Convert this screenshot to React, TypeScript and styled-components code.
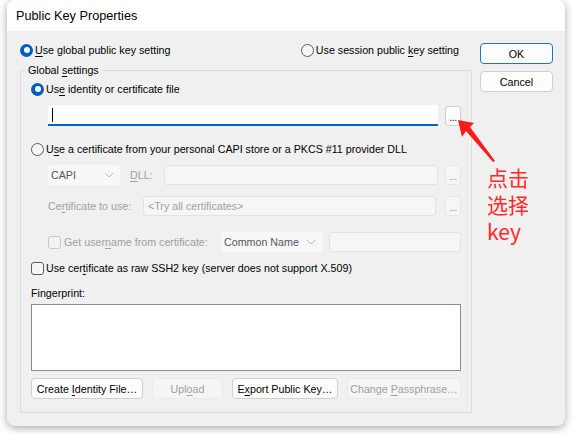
import React from "react";
import styled, { createGlobalStyle, css } from "styled-components";

const GlobalStyle = createGlobalStyle`
  html, body {
    margin: 0;
    padding: 0;
    background: #ffffff;
  }
  body {
    font-family: "Liberation Sans", Arial, sans-serif;
    font-size: 10.7px;
    color: #000;
  }
`;

const Page = styled.div`
  width: 573px;
  height: 434px;
  position: relative;
  overflow: hidden;
  background: #ffffff;
`;

const Window = styled.div`
  margin-left: 7px;
  width: 558px;
  height: 426px;
  background: #f0f0f0;
  border-radius: 8px;
  box-shadow: 0 2px 8px rgba(0, 0, 0, 0.35);
  display: flex;
  flex-direction: column;
  overflow: hidden;
`;

const TitleBar = styled.div`
  height: 31px;
  flex: none;
  background: #ffffff;
  display: flex;
  align-items: center;
  padding-left: 9px;
  font-size: 12.7px;
`;

const Body = styled.div`
  flex: 1;
  display: flex;
  gap: 8px;
  padding: 11px 13px 14px 13px;
`;

const LeftColumn = styled.div`
  width: 452px;
  display: flex;
  flex-direction: column;
`;

const RightColumn = styled.div`
  flex: 1;
  display: flex;
  flex-direction: column;
  gap: 7px;
  padding-top: 1px;
`;

const Row = styled.div<{ $h?: number; $mt?: number; $indent?: number }>`
  display: flex;
  align-items: center;
  height: ${({ $h }) => $h ?? 16}px;
  margin-top: ${({ $mt }) => $mt ?? 0}px;
  padding-left: ${({ $indent }) => $indent ?? 0}px;
`;

const TopRow = styled(Row)`
  justify-content: space-between;
  padding-right: 13px;
`;

const Option = styled.label<{ $disabled?: boolean }>`
  display: flex;
  align-items: center;
  gap: 2px;
  white-space: nowrap;
  color: ${({ $disabled }) => ($disabled ? "#a0a0a0" : "#000")};
`;

const RadioMark = styled.span<{ $checked?: boolean }>`
  width: 13px;
  height: 13px;
  box-sizing: border-box;
  border-radius: 50%;
  flex: none;
  position: relative;
  ${({ $checked }) =>
    $checked
      ? css`
          background: #005fb8;
          &::after {
            content: "";
            position: absolute;
            left: 3.5px;
            top: 3.5px;
            width: 6px;
            height: 6px;
            border-radius: 50%;
            background: #fff;
          }
        `
      : css`
          border: 1px solid #5c5c5c;
          background: #f6f6f6;
        `}
`;

const CheckMark = styled.span<{ $disabled?: boolean }>`
  width: 13px;
  height: 13px;
  box-sizing: border-box;
  border-radius: 3px;
  flex: none;
  border: 1px solid ${({ $disabled }) => ($disabled ? "#c9c9c9" : "#5c5c5c")};
  background: ${({ $disabled }) => ($disabled ? "#f3f3f3" : "#f6f6f6")};
`;

const U = styled.span`
  text-decoration: underline;
  text-underline-offset: 2px;
`;

const GroupBox = styled.fieldset`
  margin: 4px 0 0 0;
  padding: 0 10px 13px 10px;
  border: 1px solid #dcdcdc;
  min-width: 0;
  flex: 1;
  display: flex;
  flex-direction: column;
`;

const Legend = styled.legend`
  padding: 0 3px;
  margin-left: -6px;
  line-height: 16px;
  height: 16px;
`;

const TextField = styled.div<{ $w: number; $disabled?: boolean; $active?: boolean }>`
  width: ${({ $w }) => $w}px;
  height: 100%;
  box-sizing: border-box;
  flex: none;
  border-radius: 3px;
  display: flex;
  align-items: center;
  padding-left: 4px;
  color: #a0a0a0;
  white-space: nowrap;
  ${({ $active }) =>
    $active
      ? css`
          background: #ffffff;
          border-radius: 3px 3px 0 0;
          border-bottom: 2px solid #0067c0;
        `
      : css`
          background: #f6f6f6;
          border: 1px solid #e3e3e3;
        `}
`;

const Caret = styled.span`
  width: 1px;
  height: 14px;
  background: #000;
`;

const Browse = styled.div<{ $disabled?: boolean }>`
  width: 16px;
  height: 20px;
  box-sizing: border-box;
  flex: none;
  margin-left: auto;
  border-radius: 3px;
  display: flex;
  align-items: flex-end;
  justify-content: center;
  padding-bottom: 3px;
  font-size: 11px;
  line-height: 10px;
  letter-spacing: -0.5px;
  color: ${({ $disabled }) => ($disabled ? "#9a9aa8" : "#1a1a40")};
  background: ${({ $disabled }) => ($disabled ? "#f6f6f6" : "#fdfdfd")};
  border: 1px solid ${({ $disabled }) => ($disabled ? "#e6e6e6" : "#cfcfcf")};
`;

const Select = styled.div<{ $w: number }>`
  width: ${({ $w }) => $w}px;
  height: 100%;
  box-sizing: border-box;
  flex: none;
  border-radius: 3px;
  background: #f8f8f8;
  display: flex;
  align-items: center;
  justify-content: space-between;
  padding: 0 6px 0 3px;
  color: #555566;
  white-space: nowrap;
`;

const Chevron = () => (
  <svg width="10" height="6" viewBox="0 0 10 6">
    <path d="M1 1 L5 5 L9 1" fill="none" stroke="#b8b8b8" strokeWidth="1" />
  </svg>
);

const FieldLabel = styled.span<{ $ml?: number; $w?: number }>`
  color: #a0a0a0;
  margin-left: ${({ $ml }) => $ml ?? 0}px;
  width: ${({ $w }) => ($w ? `${$w}px` : "auto")};
  flex: none;
  white-space: nowrap;
`;

const Plain = styled.span`
  white-space: nowrap;
`;

const Fingerprint = styled.div`
  height: 67px;
  box-sizing: border-box;
  margin-top: 3px;
  background: #ffffff;
  border: 1px solid #8a8a98;
`;

const ButtonRow = styled.div`
  display: flex;
  gap: 9px;
  height: 21px;
  margin-top: 7px;
`;

const Button = styled.div<{ $w: number; $disabled?: boolean; $default?: boolean }>`
  width: ${({ $w }) => $w}px;
  height: 21px;
  box-sizing: border-box;
  flex: none;
  border-radius: 4px;
  display: flex;
  align-items: center;
  justify-content: center;
  white-space: nowrap;
  color: ${({ $disabled }) => ($disabled ? "#a0a0a0" : "#000")};
  background: ${({ $disabled }) => ($disabled ? "#f5f5f5" : "#fdfdfd")};
  border: 1px solid
    ${({ $disabled, $default }) =>
      $default ? "#1f72c4" : $disabled ? "#ebebeb" : "#d0d0d0"};
`;

const Annotation = styled.div`
  position: absolute;
  left: 487px;
  top: 165px;
  display: flex;
  flex-direction: column;
  gap: 3px;
  font-family: "Noto Sans CJK SC", "Noto Sans", sans-serif;
  font-size: 21px;
  line-height: 24px;
  color: #ff2a2a;
`;

const ArrowSvg = styled.svg`
  position: absolute;
  left: 450px;
  top: 115px;
`;

export default function App() {
  return (
    <Page>
      <GlobalStyle />
      <Window>
        <TitleBar>Public Key Properties</TitleBar>
        <Body>
          <LeftColumn>
            <TopRow>
              <Option>
                <RadioMark $checked />
                <span>
                  <U>U</U>se global public key setting
                </span>
              </Option>
              <Option>
                <RadioMark />
                <span>
                  Use session public <U>k</U>ey setting
                </span>
              </Option>
            </TopRow>
            <GroupBox>
              <Legend>
                Global <U>s</U>ettings
              </Legend>
              <Row $mt={3}>
                <Option>
                  <RadioMark $checked />
                  <span>
                    Us<U>e</U> identity or certificate file
                  </span>
                </Option>
              </Row>
              <Row $h={21} $mt={8} $indent={17}>
                <TextField $w={390} $active>
                  <Caret />
                </TextField>
                <Browse>...</Browse>
              </Row>
              <Row $mt={15}>
                <Option>
                  <RadioMark />
                  <span>
                    U<U>s</U>e a certificate from your personal CAPI store or a PKCS #11 provider DLL
                  </span>
                </Option>
              </Row>
              <Row $h={20} $mt={8} $indent={17}>
                <Select $w={72}>
                  <span>CAPI</span>
                  <Chevron />
                </Select>
                <FieldLabel $ml={10} $w={34}>
                  <U>D</U>LL:
                </FieldLabel>
                <TextField $w={274} $disabled />
                <Browse $disabled>...</Browse>
              </Row>
              <Row $h={20} $mt={11} $indent={17}>
                <FieldLabel $w={95}>
                  Ce<U>r</U>tificate to use:
                </FieldLabel>
                <TextField $w={293} $disabled>
                  &lt;Try all certificates&gt;
                </TextField>
                <Browse $disabled>...</Browse>
              </Row>
              <Row $h={20} $mt={16} $indent={17}>
                <Option $disabled>
                  <CheckMark $disabled />
                  <FieldLabel $w={157} $ml={1}>
                    Get user<U>n</U>ame from certificate:
                  </FieldLabel>
                </Option>
                <Select $w={101}>
                  <span>Common Name</span>
                  <Chevron />
                </Select>
                <TextField $w={132} $disabled style={{ marginLeft: "auto" }} />
              </Row>
              <Row $mt={8}>
                <Option>
                  <CheckMark />
                  <span>
                    Use cer<U>t</U>ificate as raw SSH2 key (server does not support X.509)
                  </span>
                </Option>
              </Row>
              <Row $mt={9}>
                <Plain>Fingerprint:</Plain>
              </Row>
              <Fingerprint />
              <ButtonRow>
                <Button $w={112}>
                  Create&nbsp;<U>I</U>dentity File…
                </Button>
                <Button $w={71} $disabled>
                  Upl<U>o</U>ad
                </Button>
                <Button $w={106}>
                  E<U>x</U>port Public Key…
                </Button>
                <Button $w={114} $disabled>
                  Change&nbsp;<U>P</U>assphrase…
                </Button>
              </ButtonRow>
            </GroupBox>
          </LeftColumn>
          <RightColumn>
            <Button $w={73} $default>
              OK
            </Button>
            <Button $w={73}>Cancel</Button>
          </RightColumn>
        </Body>
      </Window>
      <ArrowSvg width="50" height="52" viewBox="0 0 50 52">
        <path d="M8 5 L24 8 L20 12 L45 46 L43 47 L16 16 L12 22 Z" fill="#ff1a1a" />
      </ArrowSvg>
      <Annotation>
        <span>点击</span>
        <span>选择</span>
        <span>key</span>
      </Annotation>
    </Page>
  );
}
